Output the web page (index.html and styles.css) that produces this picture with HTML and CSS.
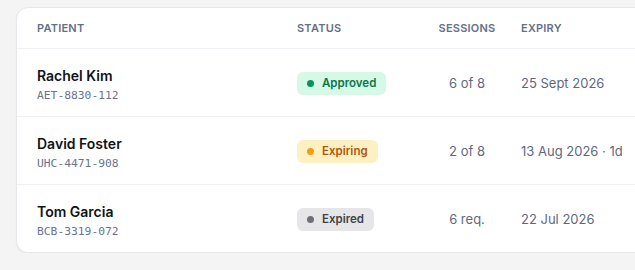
FILE: index.html
```html
<!DOCTYPE html>
<html lang="en">
<head>
<meta charset="utf-8">
<title>Patients</title>
<link rel="stylesheet" href="styles.css">
</head>
<body>
<div class="card">
  <table class="tbl">
    <colgroup>
      <col class="c-patient">
      <col class="c-status">
      <col class="c-sessions">
      <col class="c-expiry">
    </colgroup>
    <thead>
      <tr>
        <th>Patient</th>
        <th>Status</th>
        <th class="sessions">Sessions</th>
        <th>Expiry</th>
      </tr>
    </thead>
    <tbody>
      <tr>
        <td class="patient"><div class="name">Rachel Kim</div><div class="pid">AET-8830-112</div></td>
        <td><span class="badge approved"><span class="dot"></span>Approved</span></td>
        <td class="sessions">6 of 8</td>
        <td class="expiry">25 Sept 2026</td>
      </tr>
      <tr>
        <td class="patient"><div class="name">David Foster</div><div class="pid">UHC-4471-908</div></td>
        <td><span class="badge expiring"><span class="dot"></span>Expiring</span></td>
        <td class="sessions">2 of 8</td>
        <td class="expiry">13 Aug 2026 · 1d</td>
      </tr>
      <tr>
        <td class="patient"><div class="name">Tom Garcia</div><div class="pid">BCB-3319-072</div></td>
        <td><span class="badge expired"><span class="dot"></span>Expired</span></td>
        <td class="sessions">6 req.</td>
        <td class="expiry">22 Jul 2026</td>
      </tr>
    </tbody>
  </table>
</div>
</body>
</html>
```

FILE: styles.css
```css
html, body {
  margin: 0;
  padding: 0;
  overflow: hidden;
  background: #f4f4f5;
}
body {
  padding: 7px 0 0 16px;
  font-family: Inter, "Noto Sans", sans-serif;
  color: #111827;
}
.card {
  width: 700px;
  background: #ffffff;
  border: 1px solid #e6e7eb;
  border-radius: 12px;
  box-shadow: 0 1px 2px rgba(16, 24, 40, 0.05);
  overflow: hidden;
}
.tbl {
  width: 100%;
  border-collapse: collapse;
  table-layout: fixed;
}
.c-patient { width: 260px; }
.c-status { width: 141px; }
.c-sessions { width: 83px; }
th {
  height: 40px;
  padding: 0 0 0 20px;
  text-align: left;
  font-size: 11px;
  font-weight: 600;
  letter-spacing: 0.02em;
  text-transform: uppercase;
  color: #64708a;
  border-bottom: 1px solid #f0f1f4;
  white-space: nowrap;
}
td {
  height: 67px;
  padding: 0 0 0 20px;
  vertical-align: middle;
  border-bottom: 1px solid #eff0f3;
  white-space: nowrap;
}
td.patient {
  padding-top: 2px;
  height: 65px;
}
tbody tr:last-child td { border-bottom: none; }
th.sessions, td.sessions {
  text-align: center;
  padding: 0 5px 0 20px;
}
.name {
  font-size: 14px;
  font-weight: 600;
  line-height: 22px;
  color: #111318;
}
.pid {
  margin-top: 1px;
  font-family: "DejaVu Sans Mono", "Liberation Mono", monospace;
  font-size: 11.3px;
  line-height: 15px;
  color: #6b7390;
}
td.sessions, td.expiry {
  font-size: 13px;
  color: #5f6880;
}
.badge {
  display: inline-flex;
  align-items: center;
  gap: 8px;
  height: 23px;
  padding: 0 10px;
  border-radius: 6px;
  font-size: 11.5px;
  font-weight: 600;
}
.dot {
  width: 7px;
  height: 7px;
  border-radius: 50%;
}
.approved { background: #d6f8e7; color: #06774f; }
.approved .dot { background: #07935f; }
.expiring { background: #fdf1c4; color: #b1560b; }
.expiring .dot { background: #f59e0b; }
.expired { background: #e6e6e8; color: #3f424a; }
.expired .dot { background: #6f7078; }
```
